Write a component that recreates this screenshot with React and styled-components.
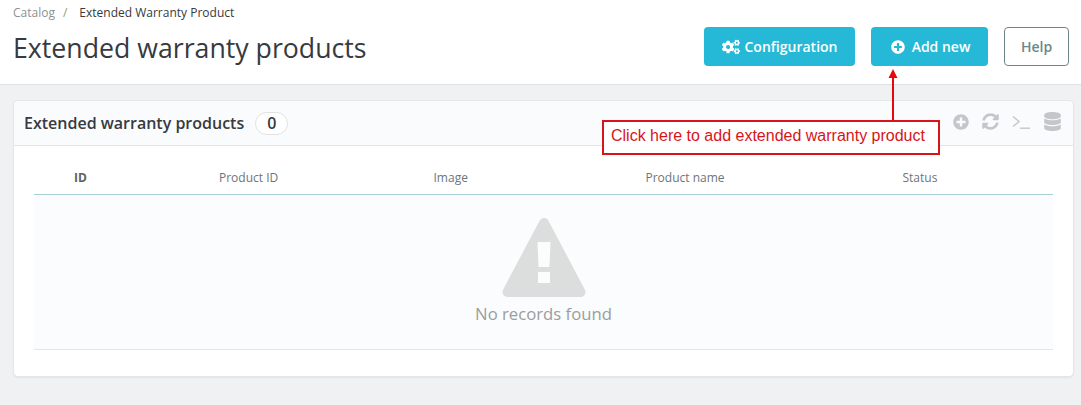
import React from "react";
import styled, { createGlobalStyle } from "styled-components";
import { FaCogs, FaPlusCircle, FaSyncAlt, FaDatabase } from "react-icons/fa";

const Global = createGlobalStyle`
  html, body { margin: 0; padding: 0; background: #eff1f2; }
  body { font-family: "Open Sans", "Liberation Sans", sans-serif; color: #363a41; }
`;
const Page = styled.div`
  position: relative; width: 1081px; height: 405px; overflow: hidden; background: #eff1f2;
`;
const Header = styled.header`
  height: 85px; box-sizing: border-box; background: #fff; border-bottom: 1px solid #dfe2e3;
  padding: 0 12px 0 13px; display: flex; justify-content: space-between;
`;
const TitleBlock = styled.div`display: flex; flex-direction: column;`;
const Breadcrumb = styled.div`
  display: flex; font-size: 12px; line-height: 16px; margin-top: 5px; color: #363a41;
`;
const Crumb = styled.span`color: #8c9196;`;
const Sep = styled.span`color: #8a9a80; margin: 0 12px 0 8px;`;
const Title = styled.h1`
  margin: 7px 0 0; font-weight: 400; font-size: 26.7px; line-height: 40px; color: #363a41;
`;
const Actions = styled.div`display: flex; gap: 16px; padding-top: 27px; align-items: flex-start;`;
const Button = styled.div`
  height: 39px; box-sizing: border-box; width: ${p => p.$w}px; border-radius: 4px;
  padding-left: ${p => p.$pad || 0}px;
  display: flex; align-items: center; justify-content: center; gap: ${p => p.$gap || 6}px;
  font-size: 14px; font-weight: 600; background: #25b9d7; color: #fff;
`;
const HelpButton = styled(Button)`
  background: #fff; color: #6c868e; border: 1px solid #6c868e; font-weight: 600;
`;
const Panel = styled.section`
  margin: 15px 7px 0 13px; height: 277px; box-sizing: border-box; background: #fff;
  border: 1px solid #e4e7e8; border-radius: 5px; box-shadow: 0 1px 2px rgba(0,0,0,.06);
  display: flex; flex-direction: column;
`;
const PanelHead = styled.div`
  height: 45px; flex: none; box-sizing: border-box; background: #fafbfc; border-bottom: 1px solid #e3e6e8;
  border-radius: 5px 5px 0 0; padding: 0 11px 0 10px; display: flex; align-items: center;
`;
const PanelTitle = styled.div`font-size: 16px; font-weight: 600; color: #363a41;`;
const Badge = styled.span`
  margin-left: 11px; width: 33px; height: 23px; box-sizing: border-box; border: 1px solid #dfe1e3;
  border-radius: 12px; background: #fff; display: flex; align-items: center; justify-content: center;
  font-size: 16px; font-weight: 600;
`;
const Tools = styled.div`
  margin-left: auto; margin-top: -3px; display: flex; align-items: center; gap: 13px; color: #c4c7c9;
`;
const Table = styled.div`margin: 0 20px; display: flex; flex-direction: column;`;
const HeadRow = styled.div`
  height: 49px; box-sizing: border-box; border-bottom: 1px solid #a9cfdb; padding-top: 15px;
  display: grid; grid-template-columns: 185px 214.5px 212px 257px 1fr; align-items: center;
  font-size: 12px; color: #6c757b;
`;
const HeadCell = styled.div`
  padding-left: ${p => p.$pad}px; font-weight: ${p => p.$bold ? 700 : 400};
  color: ${p => p.$bold ? "#5c6267" : "#6c757b"};
`;
const Empty = styled.div`
  height: 155px; box-sizing: border-box; background: #fbfcfd; border-bottom: 1px solid #e4e7e8;
  display: flex; flex-direction: column; align-items: center; padding-top: 23px; color: #9a9d9f;
  font-size: 16.7px; line-height: 22px;
`;
const WarningSvg = styled.svg`display: block; margin-bottom: 6px;`;
const Note = styled.div`
  position: absolute; left: 602px; top: 120px; width: 338px; height: 35px; box-sizing: border-box;
  border: 2px solid #d8141a; background: #fff; color: #d8141a;
  font-family: "Liberation Sans", Arial, sans-serif; font-size: 16px; line-height: 27px;
  padding-left: 7px; white-space: nowrap;
`;
const ArrowLayer = styled.svg`position: absolute; left: 885px; top: 66px;`;

const Terminal = () => (
  <svg width="18" height="16" viewBox="0 0 18 16" fill="none" stroke="#c4c7c9" strokeWidth="1.4">
    <path d="M1 2.5 L7 7.5 L1 12.5" />
    <path d="M8 14.2 H18" />
  </svg>
);

const Warning = () => (
  <WarningSvg width="84" height="79" viewBox="0 0 84 79">
    <path d="M42 5 L78.5 74 H5.5 Z" fill="#dcdddd" stroke="#dcdddd" strokeWidth="10" strokeLinejoin="round" />
    <path d="M35.5 24 H48.5 L47.5 49 H36.5 Z" fill="#fbfcfd" />
    <rect x="36" y="54" width="12" height="11" fill="#fbfcfd" />
  </WarningSvg>
);

export default function App() {
  return (
    <Page>
      <Global />
      <Header>
        <TitleBlock>
          <Breadcrumb>
            <Crumb>Catalog</Crumb><Sep>/</Sep><span>Extended Warranty Product</span>
          </Breadcrumb>
          <Title>Extended warranty products</Title>
        </TitleBlock>
        <Actions>
          <Button $w={151} $gap={5}><FaCogs size={18} />Configuration</Button>
          <Button $w={117} $gap={7} $pad={2}><FaPlusCircle size={14} />Add new</Button>
          <HelpButton $w={65}>Help</HelpButton>
        </Actions>
      </Header>
      <Panel>
        <PanelHead>
          <PanelTitle>Extended warranty products</PanelTitle>
          <Badge>0</Badge>
          <Tools>
            <FaPlusCircle size={16} />
            <FaSyncAlt size={17} />
            <Terminal />
            <FaDatabase size={19} />
          </Tools>
        </PanelHead>
        <Table>
          <HeadRow>
            <HeadCell $pad={40} $bold>ID</HeadCell>
            <HeadCell>Product ID</HeadCell>
            <HeadCell>Image</HeadCell>
            <HeadCell>Product name</HeadCell>
            <HeadCell>Status</HeadCell>
          </HeadRow>
          <Empty>
            <Warning />
            No records found
          </Empty>
        </Table>
      </Panel>
      <Note>Click here to add extended warranty product</Note>
      <ArrowLayer width="16" height="56" viewBox="0 0 16 56">
        <path d="M8 54 V10" stroke="#e8070d" strokeWidth="2" fill="none" />
        <path d="M8 3 L12.5 12 H3.5 Z" fill="#e8070d" />
      </ArrowLayer>
    </Page>
  );
}
